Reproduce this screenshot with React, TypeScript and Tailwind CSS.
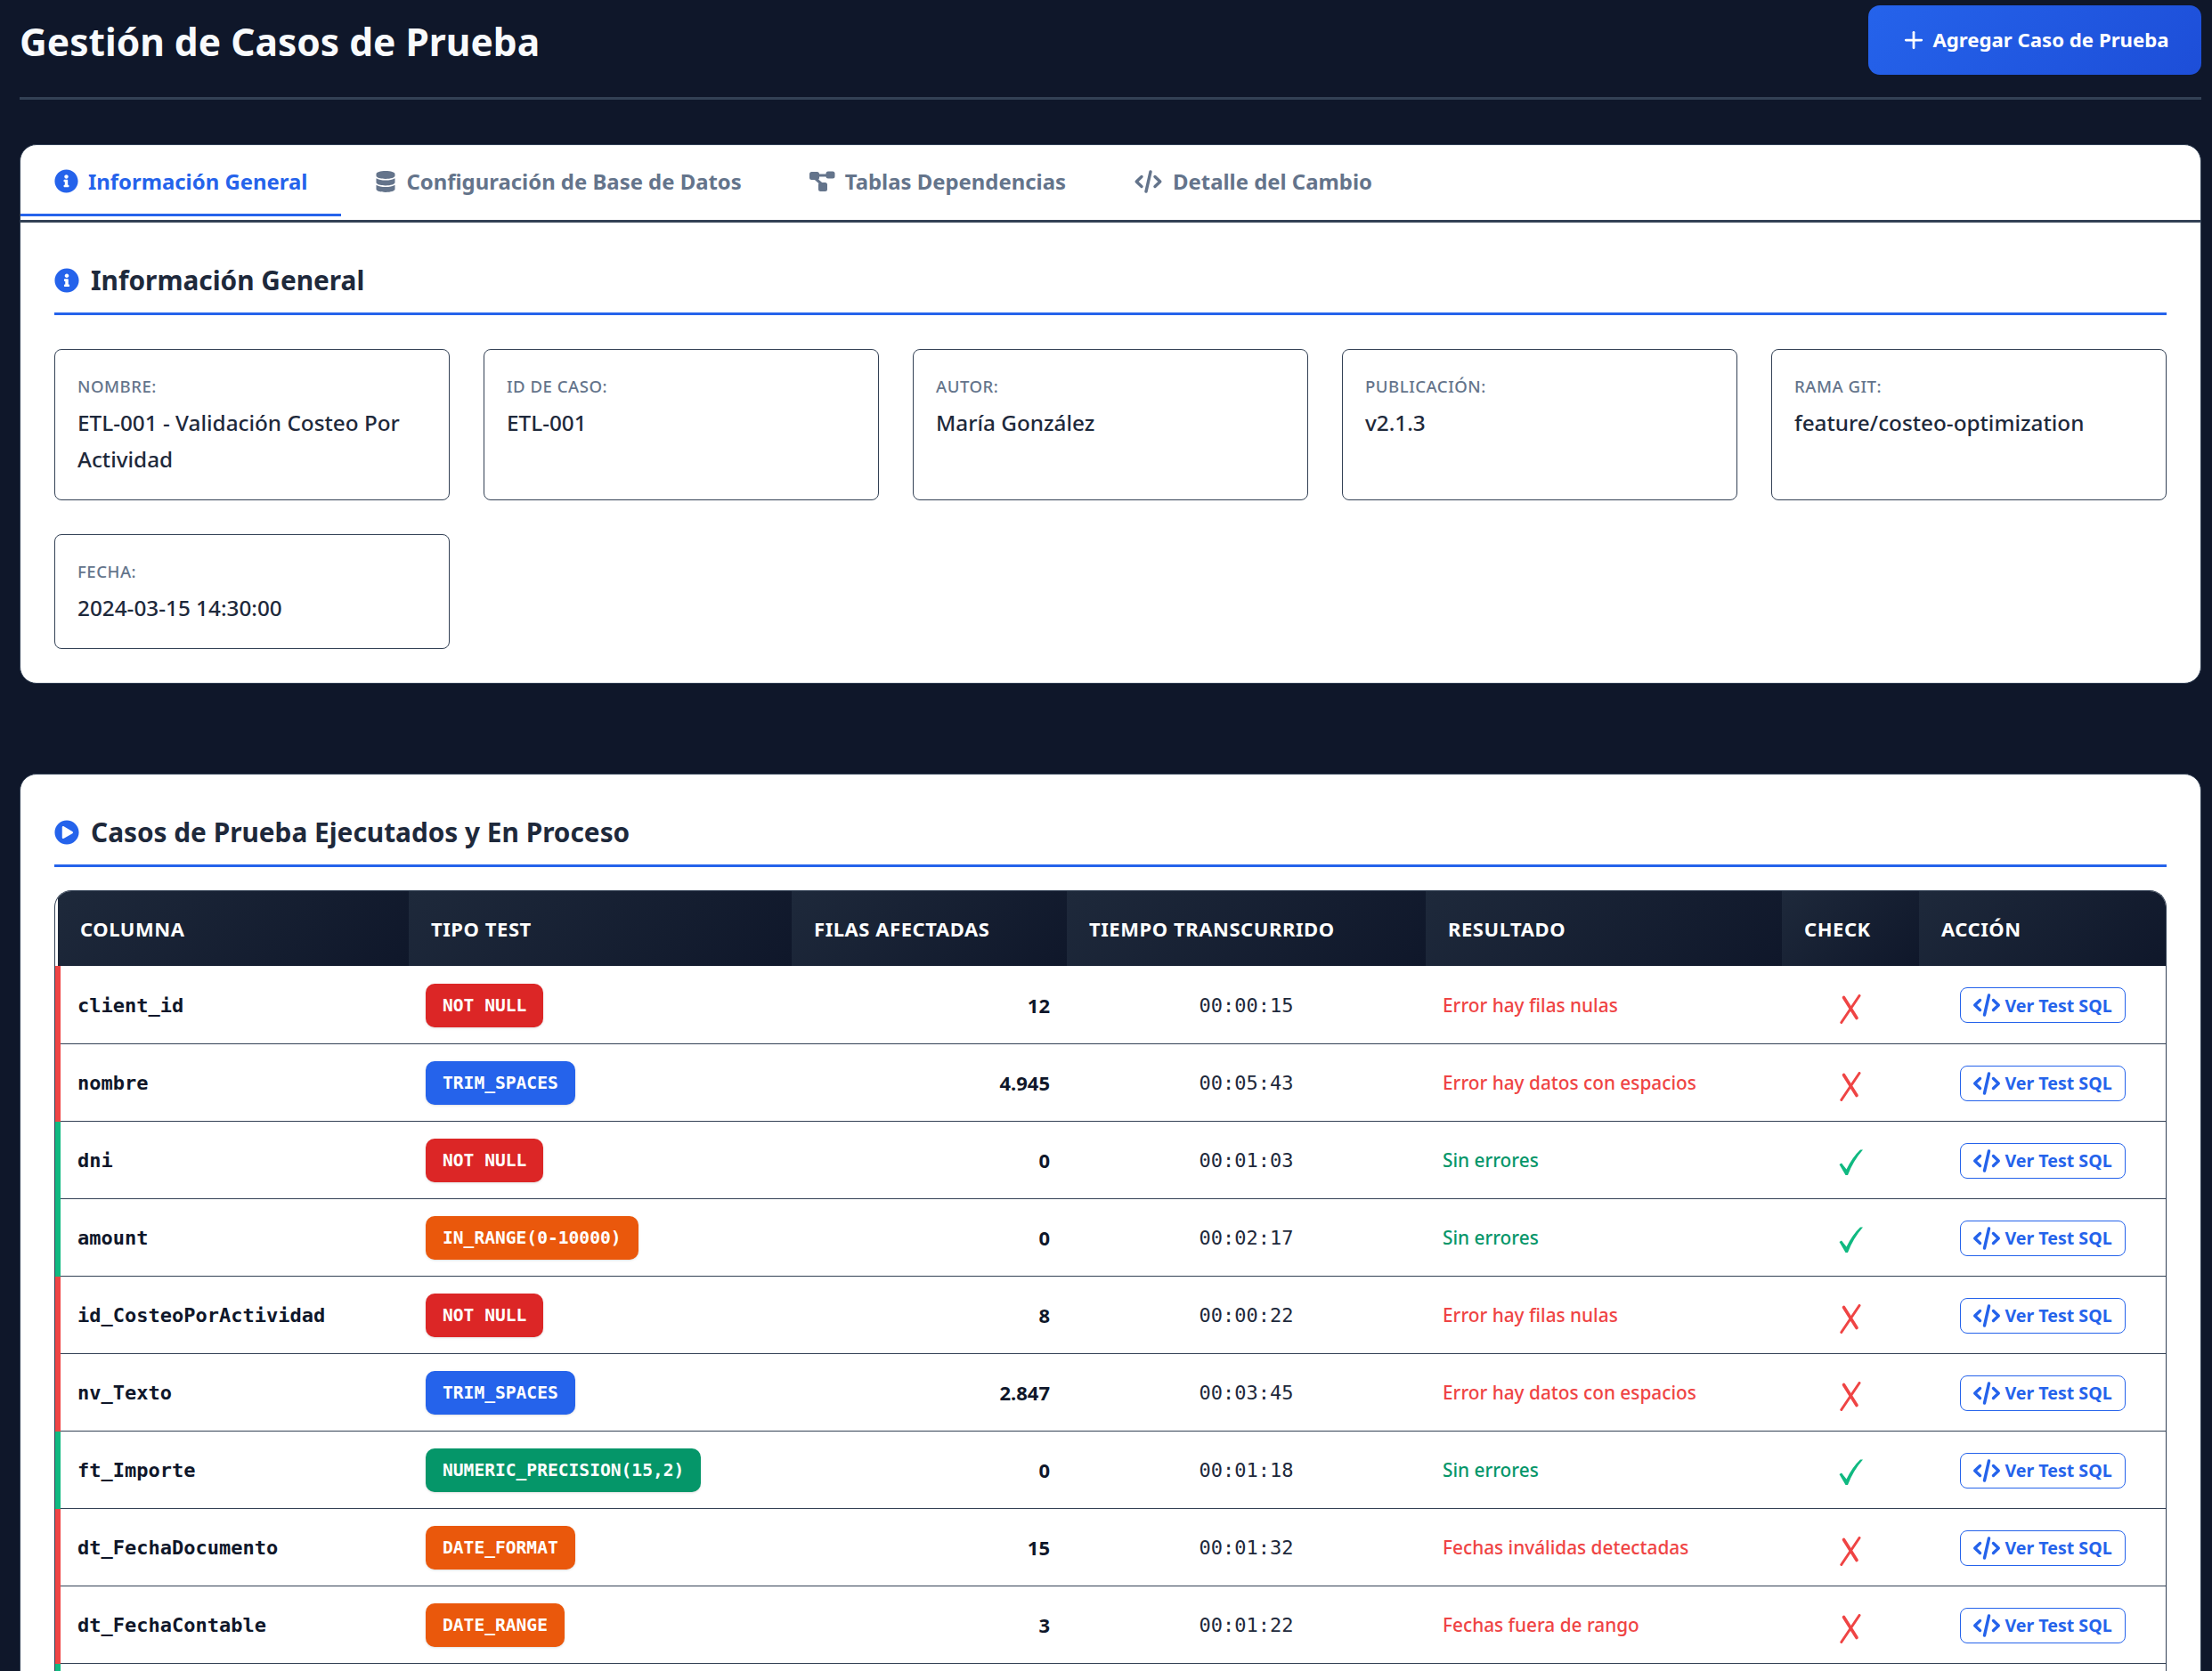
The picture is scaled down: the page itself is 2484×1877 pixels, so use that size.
import { Plus } from "lucide-react";
import { FaDatabase, FaInfoCircle, FaPlayCircle } from "react-icons/fa";

type Row = {
  column: string;
  test: string;
  badge: string;
  rows: string;
  time: string;
  result: string;
  ok: boolean;
};

const BLUE = "bg-[#2563eb]";
const RED = "bg-[#dc2626]";
const ORANGE = "bg-[#ea580c]";
const GREEN = "bg-[#059669]";

const ROWS: Row[] = [
  { column: "client_id", test: "NOT NULL", badge: RED, rows: "12", time: "00:00:15", result: "Error hay filas nulas", ok: false },
  { column: "nombre", test: "TRIM_SPACES", badge: BLUE, rows: "4.945", time: "00:05:43", result: "Error hay datos con espacios", ok: false },
  { column: "dni", test: "NOT NULL", badge: RED, rows: "0", time: "00:01:03", result: "Sin errores", ok: true },
  { column: "amount", test: "IN_RANGE(0-10000)", badge: ORANGE, rows: "0", time: "00:02:17", result: "Sin errores", ok: true },
  { column: "id_CosteoPorActividad", test: "NOT NULL", badge: RED, rows: "8", time: "00:00:22", result: "Error hay filas nulas", ok: false },
  { column: "nv_Texto", test: "TRIM_SPACES", badge: BLUE, rows: "2.847", time: "00:03:45", result: "Error hay datos con espacios", ok: false },
  { column: "ft_Importe", test: "NUMERIC_PRECISION(15,2)", badge: GREEN, rows: "0", time: "00:01:18", result: "Sin errores", ok: true },
  { column: "dt_FechaDocumento", test: "DATE_FORMAT", badge: ORANGE, rows: "15", time: "00:01:32", result: "Fechas inválidas detectadas", ok: false },
  { column: "dt_FechaContable", test: "DATE_RANGE", badge: ORANGE, rows: "3", time: "00:01:22", result: "Fechas fuera de rango", ok: false },
];

const CARDS = [
  { label: "Nombre:", value: "ETL-001 - Validación Costeo Por Actividad" },
  { label: "ID de Caso:", value: "ETL-001" },
  { label: "Autor:", value: "María González" },
  { label: "Publicación:", value: "v2.1.3" },
  { label: "Rama Git:", value: "feature/costeo-optimization" },
  { label: "Fecha:", value: "2024-03-15 14:30:00" },
];

const TH = "bg-[linear-gradient(135deg,#1e293b,#0f172a)] px-[25px] text-left text-[22px] font-bold uppercase tracking-[0.55px] text-white";
const MONO = "font-['DejaVu_Sans_Mono',monospace]";

function CodeIcon({ className }: { className: string }) {
  return (
    <svg viewBox="0 0 31 26" fill="none" stroke="currentColor" strokeWidth="3.4" strokeLinecap="round" strokeLinejoin="round" className={className}>
      <path d="M8 7.5 2.2 13 8 18.5" />
      <path d="M23 7.5 28.8 13 23 18.5" />
      <path d="M18 2 13 24" />
    </svg>
  );
}

function DiagramIcon({ className }: { className: string }) {
  return (
    <svg viewBox="0 0 29 23" fill="currentColor" className={className}>
      <rect x="0" y="1" width="11" height="9" rx="2.5" />
      <rect x="18.5" y="0.5" width="10" height="8" rx="2.5" />
      <rect x="10" y="13" width="10" height="10" rx="2.5" />
      <path d="M9 5H20M6 8 14 15" fill="none" stroke="currentColor" strokeWidth="3" />
    </svg>
  );
}

function CrossMark() {
  return (
    <svg viewBox="0 0 24 33" fill="none" stroke="#ef4444" strokeLinecap="round" className="mx-auto mt-[8px] h-[33px] w-[24px]">
      <path d="M22 1.5 1.8 31.5" strokeWidth="3" />
      <path d="M4.5 3.5 19 26.5" strokeWidth="3.6" />
    </svg>
  );
}

function CheckMark() {
  return (
    <svg viewBox="0 0 27 29" fill="#10b981" className="mx-auto mt-[3px] h-[29px] w-[27px]">
      <path d="M.5 17 3 15.5 8.5 22.5Q15 9 24 .5H27Q16 13 10 29H7.5Z" />
    </svg>
  );
}

function Tab({ icon, label, active }: { icon: React.ReactNode; label: string; active?: boolean }) {
  return (
    <div
      className={`flex h-[80px] items-center gap-[11px] border-b-[3px] px-[38px] pt-[4px] text-[23.9px] font-bold ${
        active ? "border-[#2563eb] text-[#2563eb]" : "border-transparent text-[#64748b]"
      }`}
    >
      {icon}
      <span>{label}</span>
    </div>
  );
}

function SectionTitle({ icon, children }: { icon: React.ReactNode; children: React.ReactNode }) {
  return (
    <h2 className="flex items-center gap-[13px] border-b-[3px] border-[#2563eb] pt-[3px] pb-[12px] text-[29.8px] font-bold leading-[48px] text-[#1e293b]">
      {icon}
      {children}
    </h2>
  );
}

export default function App() {
  return (
    <div className="h-[1877px] overflow-hidden bg-[#0f172a] pt-[6px] pr-[12px] pl-[22px] font-['Noto_Sans',sans-serif] text-[#1e293b]">
      <header className="flex items-start justify-between border-b-[3px] border-[#334155] pb-[25px]">
        <h1 className="pt-[11px] text-[42.5px] font-bold leading-[60px] text-[#f8fafc]">Gestión de Casos de Prueba</h1>
        <button className="flex h-[78px] w-[374px] items-center justify-center gap-[6px] rounded-[13px] bg-[linear-gradient(135deg,#2563eb,#1d4ed8)] text-[22.2px] font-bold text-white">
          <Plus className="size-[30px]" strokeWidth={2.2} />
          Agregar Caso de Prueba
        </button>
      </header>

      <section className="mt-[50px] overflow-hidden rounded-[19px] border border-[#334155] bg-white">
        <nav className="flex h-[87px] border-b-[3px] border-[#334155]">
          <Tab active icon={<FaInfoCircle className="size-[27px]" />} label="Información General" />
          <Tab icon={<FaDatabase className="size-[24px]" />} label="Configuración de Base de Datos" />
          <Tab icon={<DiagramIcon className="h-[23px] w-[29px]" />} label="Tablas Dependencias" />
          <Tab icon={<CodeIcon className="h-[26px] w-[33px]" />} label="Detalle del Cambio" />
        </nav>
        <div className="p-[38px]">
          <SectionTitle icon={<FaInfoCircle className="size-[28px] text-[#2563eb]" />}>Información General</SectionTitle>
          <div className="mt-[38px] grid grid-cols-5 gap-[38px]">
            {CARDS.map((card) => (
              <div key={card.label} className="rounded-[8px] border border-[#334155] p-[25px]">
                <div className="pt-[1px] text-[18.6px] font-medium uppercase leading-[29px] tracking-[0.5px] text-[#64748b]">{card.label}</div>
                <div className="mt-[6px] text-[24.3px] font-medium leading-[41px] text-[#1e293b]">{card.value}</div>
              </div>
            ))}
          </div>
        </div>
      </section>

      <section className="mt-[101px] rounded-t-[19px] border border-[#334155] bg-white p-[38px] pb-0">
        <SectionTitle icon={<FaPlayCircle className="size-[28px] text-[#2563eb]" />}>Casos de Prueba Ejecutados y En Proceso</SectionTitle>
        <div className="mt-[26px] overflow-hidden rounded-t-[19px] border-t border-r border-l border-[#334155]">
          <table className="w-full table-fixed border-collapse">
            <colgroup>
              <col className="w-[394px]" />
              <col className="w-[430px]" />
              <col className="w-[309px]" />
              <col className="w-[403px]" />
              <col className="w-[400px]" />
              <col className="w-[154px]" />
              <col />
            </colgroup>
            <thead>
              <tr className="h-[84px]">
                <th className={TH}>Columna</th>
                <th className={TH}>Tipo Test</th>
                <th className={TH}>Filas Afectadas</th>
                <th className={TH}>Tiempo Transcurrido</th>
                <th className={TH}>Resultado</th>
                <th className={TH}>Check</th>
                <th className={TH}>Acción</th>
              </tr>
            </thead>
            <tbody>
              {ROWS.map((row) => (
                <tr key={row.column} className="h-[87px] border-b border-[#334155] [&>td]:pt-[2px]">
                  <td className={`border-l-[6px] px-[19px] text-[22px] font-semibold text-[#0f172a] ${MONO} ${row.ok ? "border-[#10b981]" : "border-[#ef4444]"}`}>
                    {row.column}
                  </td>
                  <td className="px-[19px]">
                    <span className={`inline-block rounded-[10px] px-[19px] py-[12px] text-[19.6px] font-semibold leading-[25px] text-white shadow-sm ${MONO} ${row.badge}`}>
                      {row.test}
                    </span>
                  </td>
                  <td className="px-[19px] text-right text-[22px] font-bold text-[#0f172a]">{row.rows}</td>
                  <td className={`px-[19px] text-center text-[22px] text-[#1e293b] ${MONO}`}>{row.time}</td>
                  <td className={`px-[19px] text-[20.8px] font-medium ${row.ok ? "text-[#059669]" : "text-[#ef4444]"}`}>{row.result}</td>
                  <td>{row.ok ? <CheckMark /> : <CrossMark />}</td>
                  <td className="text-center">
                    <button className="inline-flex h-[40px] w-[186px] items-center justify-center gap-[4px] rounded-[8px] border border-[#2563eb] text-[19.6px] font-bold text-[#2563eb]">
                      <CodeIcon className="h-[26px] w-[32px]" />
                      Ver Test SQL
                    </button>
                  </td>
                </tr>
              ))}
              <tr className="h-[87px]">
                <td className="border-l-[6px] border-[#10b981]" colSpan={7} />
              </tr>
            </tbody>
          </table>
        </div>
      </section>
    </div>
  );
}
